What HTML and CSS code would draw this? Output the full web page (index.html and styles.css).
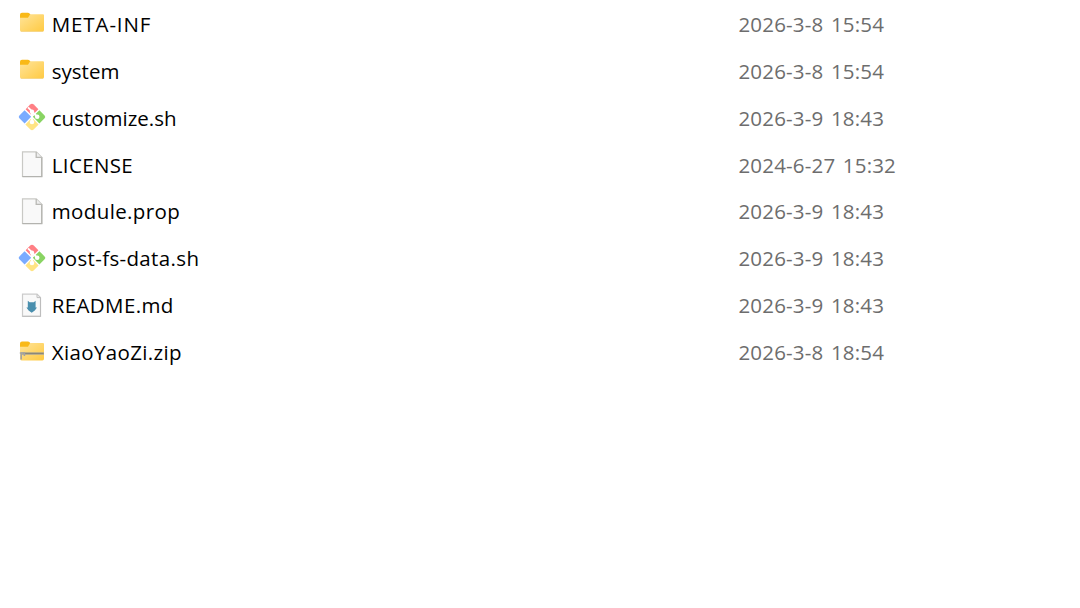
FILE: index.html
```
<!DOCTYPE html>
<html lang="en">
<head>
  <meta charset="UTF-8">
  <meta name="viewport" content="width=device-width, initial-scale=1.0">
  <title>Files</title>
  <link rel="stylesheet" href="styles.css">
</head>
<body>
  <svg class="sprite" aria-hidden="true">
    <defs>
      <linearGradient id="folderFill" x1="0" y1="0" x2="1" y2="1">
        <stop offset="0" stop-color="#ffe49a"/>
        <stop offset="1" stop-color="#ffca42"/>
      </linearGradient>
      <symbol id="folder" viewBox="0 0 28 28">
        <path d="M2 5.8Q2 3.8 4 3.8H9.8Q11 3.8 11.8 4.8L12.6 5.8V10H2z" fill="#f9b917"/>
        <path d="M2 8.8H10L12.2 5.2H25Q26 5.2 26 6.2V21Q26 22.6 24.4 22.6H3.6Q2 22.6 2 21z" fill="url(#folderFill)"/>
        <path d="M2.8 22.4H25.2" stroke="#f0c869" stroke-width=".6"/>
      </symbol>
      <symbol id="zip" viewBox="0 0 28 28">
        <path d="M2 5.6Q2 3.6 4 3.6H9.8Q11 3.6 11.8 4.6L12.6 5.6V10H2z" fill="#f9b917"/>
        <path d="M2 8.8H10L12.2 5H25Q26 5 26 6V20.8Q26 22.4 24.4 22.4H3.6Q2 22.4 2 20.8z" fill="url(#folderFill)"/>
        <path d="M3 15.6H26" stroke="#bfb188" stroke-width="2.8"/>
        <path d="M5 15.4H25.6" stroke="#88857b" stroke-width="1.1"/>
        <path d="M1.8 15H6.4V18M3.2 15V21.6" fill="none" stroke="#a3a3a3" stroke-width="1.6"/>
      </symbol>
      <symbol id="git" viewBox="0 0 28 28">
        <path d="M14 .8Q15 .8 15.8 1.6L20.4 6.2 14 12.6 7.6 6.2 12.2 1.6Q13 .8 14 .8z" fill="#ff7f84"/>
        <path d="M6.6 7.2L13.2 13.8 6.6 20.4 1.4 15.2Q0 13.8 1.4 12.4z" fill="#7aabff"/>
        <path d="M21.4 7.2L26.6 12.4Q28 13.8 26.6 15.2L21.4 20.4 14.8 13.8z" fill="#89d463"/>
        <path d="M14 14.8L20.6 21.4 15.6 26.4Q14 28 12.4 26.4L7.4 21.4z" fill="#ffe483"/>
        <path d="M10 4.4L14 8.4V19M14.5 9L19 13.5" fill="none" stroke="#fff" stroke-width="1.9"/>
        <circle cx="14" cy="8.8" r="2.2" fill="#fff"/>
        <circle cx="14" cy="19" r="2.3" fill="#fff"/>
        <circle cx="19.2" cy="13.8" r="2.3" fill="#fff"/>
      </symbol>
      <symbol id="file" viewBox="0 0 28 28">
        <path d="M4.5 1.9H18.3L23.7 7.3V26.5H4.5z" fill="#f9f9f9" stroke="#c9c9c5" stroke-width="1.2"/>
        <path d="M23.8 7V26.6H4.4" fill="none" stroke="#b3b3af" stroke-width="1.3"/>
        <path d="M18.2 2.1V7.4H23.6" fill="#eee" stroke="#b9b9b5" stroke-width="1.3"/>
      </symbol>
      <symbol id="markdown" viewBox="0 0 28 28">
        <path d="M4.5 3.1H19L22.5 6.6V25.3H4.5z" fill="#f9f9f9" stroke="#cbcbcb" stroke-width="1.2"/>
        <path d="M22.5 6.6V25.3H4.5M19 3.4V6.6H22.2" fill="none" stroke="#bdbdbd"/>
        <path d="M9.8 9.8L11.6 11.2H15.8L17.6 9.8V16.4H19L16.8 19.4 13.7 21.8 10.6 19.4 8.4 16.4H9.8z" fill="#4a8fae"/>
      </symbol>
    </defs>
  </svg>

  <div class="file-list">
    <div class="row">
      <svg class="icon"><use href="#folder"/></svg>
      <span class="name wider">META-INF</span>
      <span class="date">2026-3-8 15:54</span>
    </div>
    <div class="row">
      <svg class="icon"><use href="#folder"/></svg>
      <span class="name">system</span>
      <span class="date">2026-3-8 15:54</span>
    </div>
    <div class="row">
      <svg class="icon"><use href="#git"/></svg>
      <span class="name">customize.sh</span>
      <span class="date">2026-3-9 18:43</span>
    </div>
    <div class="row">
      <svg class="icon"><use href="#file"/></svg>
      <span class="name wide">LICENSE</span>
      <span class="date">2024-6-27 15:32</span>
    </div>
    <div class="row">
      <svg class="icon"><use href="#file"/></svg>
      <span class="name wide">module.prop</span>
      <span class="date">2026-3-9 18:43</span>
    </div>
    <div class="row">
      <svg class="icon"><use href="#git"/></svg>
      <span class="name wide">post-fs-data.sh</span>
      <span class="date">2026-3-9 18:43</span>
    </div>
    <div class="row">
      <svg class="icon"><use href="#markdown"/></svg>
      <span class="name wide">README.md</span>
      <span class="date">2026-3-9 18:43</span>
    </div>
    <div class="row">
      <svg class="icon"><use href="#zip"/></svg>
      <span class="name wide">XiaoYaoZi.zip</span>
      <span class="date">2026-3-8 18:54</span>
    </div>
  </div>
</body>
</html>
```
FILE: styles.css
```
body {
  margin: 0;
  height: 100vh;
  overflow: hidden;
  background: #fff;
  font-family: 'Open Sans', 'Noto Sans', sans-serif;
  font-size: 20.5px;
  color: #000;
}

.sprite {
  display: block;
  width: 0;
  height: 0;
}

.file-list {
  padding: 1px 0 0 17.6px;
}

.row {
  display: grid;
  grid-template-columns: 34.2px 686.7px 1fr;
  align-items: center;
  height: 46.88px;
}

.icon {
  width: 28px;
  height: 28px;
  margin-top: -2px;
}

.name,
.date {
  line-height: 28px;
  margin-top: -1px;
  white-space: nowrap;
}

.wide {
  letter-spacing: 0.36px;
}

.wider {
  letter-spacing: 0.88px;
}

.date {
  color: #6d6d6d;
  letter-spacing: 0.18px;
  word-spacing: 2px;
}
```
